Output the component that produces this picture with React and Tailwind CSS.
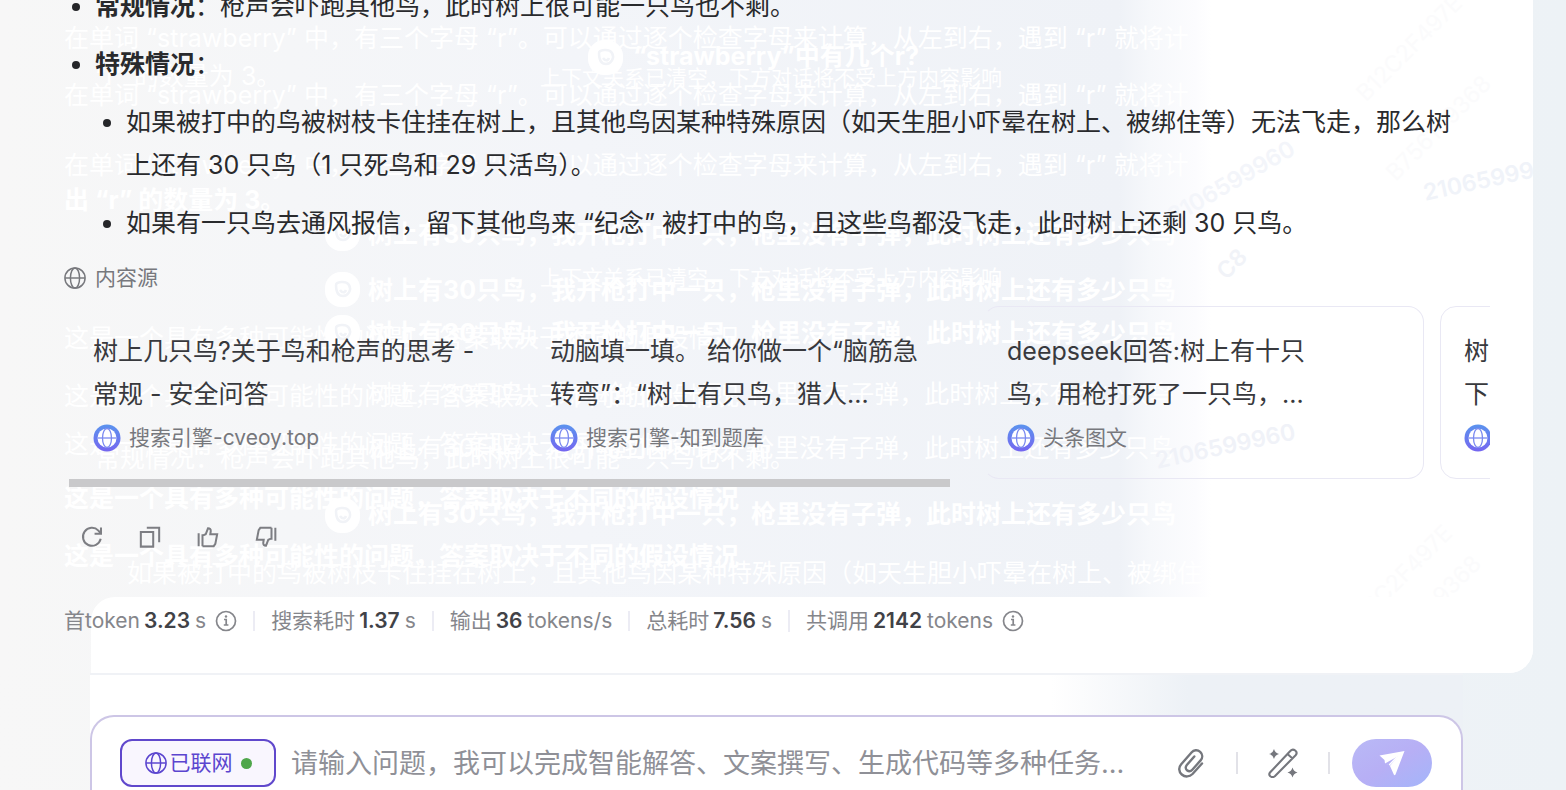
import React from "react";

const sources = [
  { lines: ["树上几只鸟?关于鸟和枪声的思考 -", "常规 - 安全问答"], from: "搜索引擎-cveoy.top" },
  { lines: ["动脑填一填。 给你做一个“脑筋急", "转弯”：“树上有只鸟，猎人..."], from: "搜索引擎-知到题库" },
  { lines: ["deepseek回答:树上有十只", "鸟，用枪打死了一只鸟，..."], from: "头条图文" },
  { lines: ["树", "下"], from: "搜索引擎" },
];

const stats = [
  { label: "首token", value: "3.23", unit: "s", info: true },
  { label: "搜索耗时", value: "1.37", unit: "s" },
  { label: "输出", value: "36", unit: "tokens/s" },
  { label: "总耗时", value: "7.56", unit: "s" },
  { label: "共调用", value: "2142", unit: "tokens", info: true },
];

const word = "在单词 “strawberry” 中，有三个字母 “r”。可以通过逐个检查字母来计算，从左到右，遇到 “r” 就将计";
const bird = "树上有30只鸟，我开枪打中一只，枪里没有子弹，此时树上还有多少只鸟";
const guess = "这是一个具有多种可能性的问题，答案取决于不同的假设情况";
const cleared = "上下文关系已清空，下方对话将不受上方内容影响";

// earlier messages that shine through the background
const traces = [
  { text: word, place: "left-[64px] top-[20px]" },
  { text: "“r” 的数量为 3。", place: "left-[95px] top-[58px]" },
  { text: word, place: "left-[64px] top-[77px]" },
  { text: "“strawberry”中有几个r?", place: "left-[633px] top-[38px] font-bold" },
  { text: cleared, place: "left-[540px] top-[60px] text-[21px]" },
  { text: word, place: "left-[64px] top-[147px]" },
  { text: "出 “r” 的数量为 3。", place: "left-[64px] top-[182px] font-bold" },
  { text: bird, place: "left-[368px] top-[216px] font-bold" },
  { text: cleared, place: "left-[540px] top-[260px] text-[21px]" },
  { text: bird, place: "left-[368px] top-[272px] font-bold" },
  { text: bird, place: "left-[368px] top-[315px] font-bold" },
  { text: guess, place: "left-[64px] top-[320px]" },
  { text: bird, place: "left-[368px] top-[376px]" },
  { text: guess, place: "left-[64px] top-[378px]" },
  { text: guess, place: "left-[64px] top-[426px]" },
  { text: bird, place: "left-[368px] top-[430px]" },
  { text: "常规情况：枪声会吓跑其他鸟，此时树上很可能一只鸟也不剩。", place: "left-[95px] top-[440px]" },
  { text: guess, place: "left-[64px] top-[480px] font-bold" },
  { text: bird, place: "left-[368px] top-[496px] font-bold" },
  { text: guess, place: "left-[64px] top-[538px] font-bold" },
  { text: "如果被打中的鸟被树枝卡住挂在树上，且其他鸟因某种特殊原因（如天生胆小吓晕在树上、被绑住", place: "left-[127px] top-[555px]" },
];

const avatars = [
  "left-[588px] top-[40px]",
  "left-[325px] top-[216px]",
  "left-[325px] top-[272px]",
  "left-[325px] top-[315px]",
  "left-[325px] top-[498px]",
];

const marks = [
  { text: "2106599960", place: "left-[1154px] top-[428px] -rotate-12 text-[#f0f2f8] font-semibold" },
  { text: "2106599960", place: "left-[1422px] top-[160px] -rotate-12 text-[#f0f3f9] font-semibold" },
  { text: "2106599960", place: "left-[1160px] top-[164px] -rotate-30 text-[#f3f5fa] font-semibold" },
  { text: "C8", place: "left-[1216px] top-[246px] -rotate-45 text-[#f1f3f8] font-semibold" },
  { text: "B12C2F497E", place: "left-[1340px] top-[30px] -rotate-45 text-[#fbfbfc]" },
  { text: "B756109368", place: "left-[1370px] top-[110px] -rotate-45 text-[#fbfbfc]" },
  { text: "B12C2F497E", place: "left-[1330px] top-[560px] -rotate-45 text-[#fbfbfc]" },
  { text: "B756109368", place: "left-[1360px] top-[590px] -rotate-45 text-[#fbfbfc]" },
];

const Globe = ({ className }) => (
  <svg viewBox="0 0 24 24" className={className} fill="none" stroke="currentColor" strokeWidth="1.6" aria-hidden="true">
    <circle cx="12" cy="12" r="11" />
    <ellipse cx="12" cy="12" rx="5" ry="11" />
    <path d="M1 12h22" />
  </svg>
);

const SourceIcon = () => (
  <svg viewBox="0 0 28 28" className="size-7 shrink-0" aria-hidden="true">
    <defs>
      <linearGradient id="globe-fill" x1="0" y1="0" x2="0" y2="1">
        <stop offset="0" stopColor="#5b93ee" />
        <stop offset="1" stopColor="#7566f0" />
      </linearGradient>
    </defs>
    <circle cx="14" cy="14" r="13.5" fill="url(#globe-fill)" />
    <circle cx="14" cy="14" r="9.5" fill="#fff" />
    <g fill="none" stroke="#7b8af0" strokeWidth="1.3">
      <ellipse cx="14" cy="14" rx="4.5" ry="9.5" />
      <path d="M4.5 14h19" />
    </g>
  </svg>
);

const InfoIcon = () => (
  <svg viewBox="0 0 22 22" className="ml-1 size-[22px]" fill="none" stroke="currentColor" strokeWidth="1.7" aria-hidden="true">
    <circle cx="11" cy="11" r="9.5" />
    <path d="M9 9.5h2.2v5.5M8.800 15h4.600" />
    <circle cx="11" cy="6.5" r="1.2" fill="currentColor" stroke="none" />
  </svg>
);

const ThumbPaths = () => (
  <path d="M1.800 8v14M6 9v13M6 10.500l3.500-1.500 2.500-6.500c2 0 3.200 1.200 3 3l-.5 3.500H22l-2 10.500-1.800 2.500H6" />
);

const actions = [
  { name: "重新生成", icon: <><path d="M21.500 14A9.800 9.800 0 1 1 19 5l2.500 3" /><path d="M21.800 1.500v7h-7" /></> },
  { name: "复制", icon: <><path d="M2 6.500h13.500v16H2z" /><path d="M8.500 1.800h13.500v16" /></> },
  { name: "赞", icon: <ThumbPaths /> },
  { name: "踩", icon: <g transform="rotate(180 12 12)"><ThumbPaths /></g> },
];

const Background = () => (
  <div aria-hidden="true" className="pointer-events-none absolute inset-0 overflow-hidden text-[25px] leading-9 whitespace-nowrap text-white select-none">
    {traces.map((t, i) => (
      <span key={i} className={`absolute ${t.place}`}>{t.text}</span>
    ))}
    {avatars.map((place) => (
      <span key={place} className={`absolute size-[35px] rounded-2xl bg-white ${place}`}>
        <svg viewBox="0 0 35 35" className="size-full" fill="none" stroke="#f1f3f7" strokeWidth="2.5">
          <path d="M11 13c0-3 10-5 13 0s-1 11-6 11-7-5-7-11zM15 18c2 3 5 3 6 0" />
        </svg>
      </span>
    ))}
    {marks.map((m, i) => (
      <span key={i} className={`absolute text-[23px] ${m.place}`}>{m.text}</span>
    ))}
  </div>
);

const Bullet = ({ children }) => (
  <li className="flex gap-[15px] pl-2">
    <span className="mt-[18px] size-2 shrink-0 rounded-full bg-[#252629]" />
    <div className="min-w-0 flex-1">{children}</div>
  </li>
);

const Answer = () => (
  <ul className="-mt-[15px] flex flex-col gap-[15px] pr-5 text-[25px] leading-[43px] text-[#292a2d]">
    <Bullet>
      <strong className="font-bold">常规情况</strong>：枪声会吓跑其他鸟，此时树上很可能一只鸟也不剩。
    </Bullet>
    <Bullet>
      <p><strong className="font-bold">特殊情况</strong>：</p>
      <ul className="mt-[15px] flex flex-col gap-[15px]">
        <Bullet>
          如果被打中的鸟被树枝卡住挂在树上，且其他鸟因某种特殊原因（如天生胆小吓晕在树上、被绑住等）无法飞走，那么树上还有 30 只鸟（1 只死鸟和 29 只活鸟）。
        </Bullet>
        <Bullet>
          如果有一只鸟去通风报信，留下其他鸟来 “纪念” 被打中的鸟，且这些鸟都没飞走，此时树上还剩 30 只鸟。
        </Bullet>
      </ul>
    </Bullet>
  </ul>
);

const Sources = () => (
  <section className="mt-[17px]">
    <h2 className="flex h-8 items-center gap-[9px] text-[21px] text-[#77787d]">
      <Globe className="size-[22px]" />
      内容源
    </h2>
    <div className="mt-3 ml-[5px] overflow-hidden">
      <div className="flex gap-4">
        {sources.map((s, i) => (
          <a
            key={s.from}
            href="#source"
            className={`block w-[441px] shrink-0 rounded-2xl border px-[23px] pt-[23px] pb-[18px] ${i > 1 ? "border-[#e9e8f4]" : "border-transparent"} ${i === 2 ? "border-l-transparent" : ""}`}
          >
            {s.lines.map((line) => (
              <span key={line} className="block text-[25px] leading-[43px] whitespace-nowrap text-[#38393d]">{line}</span>
            ))}
            <span className="flex h-11 items-center gap-2 text-[21px] text-[#77787d]">
              <SourceIcon />
              {s.from}
            </span>
          </a>
        ))}
      </div>
      <div className="h-2 w-[62%] bg-[#c9c9cb]" />
    </div>
  </section>
);

const Stats = () => (
  <div className="relative mt-11 pb-7">
    <div className="absolute inset-y-0 -right-[43px] left-[27px] rounded-tl-3xl bg-white" />
    <dl className="relative flex h-12 items-center text-[21px] text-[#85868b]">
      {stats.map((s, i) => (
        <div key={s.label} className={i > 0 ? "ml-4 flex items-center border-l-2 border-[#ececf4] pl-4 leading-5" : "flex items-center leading-5"}>
          <dt>{s.label}</dt>
          <dd className="ml-1 flex items-center gap-[5px]">
            <b className="font-semibold text-[#414247]">{s.value}</b>
            <span>{s.unit}</span>
            {s.info && <InfoIcon />}
          </dd>
        </div>
      ))}
    </dl>
  </div>
);

const Composer = () => (
  <div className="mr-[103px] ml-[90px] border-t-2 border-[#f0f2f6] bg-linear-to-r from-white from-70% to-[#edf1f6] to-80% pt-10">
    <form className="flex items-center rounded-t-3xl border-2 border-b-0 border-[#cdc6e6] bg-white pt-[22px] pr-[29px] pb-8 pl-7" onSubmit={(e) => e.preventDefault()}>
      <button type="button" className="flex h-12 w-[156px] shrink-0 items-center justify-center gap-[3px] rounded-xl border-2 border-[#6048cc] bg-[#f9f6fe] text-[21px] text-[#5b45cf]">
        <Globe className="size-[22px]" />
        已联网
        <span className="ml-[5px] size-[11px] rounded-full bg-[#4fa64a]" />
      </button>
      <input
        type="text"
        aria-label="问题"
        placeholder="请输入问题，我可以完成智能解答、文案撰写、生成代码等多种任务..."
        className="ml-[15px] h-12 min-w-0 flex-1 bg-transparent text-[27px] text-[#292a2d] outline-none placeholder:text-[#8f9097]"
      />
      <button type="button" aria-label="上传附件" className="ml-[30px] text-[#75777d]">
        <svg viewBox="0 0 30 30" className="size-[30px]" fill="none" stroke="currentColor" strokeWidth="2.4" strokeLinecap="round" strokeLinejoin="round">
          <path d="M26 15.500L16.500 26C13.500 29 9 29.300 5.800 26.500C2.500 23.500 2.500 19.200 5.200 16.200L15.500 4.500C17.800 1.800 21.500 1.500 24.200 3.800C26.800 6.200 26.800 9.800 24.600 12.400L16.300 21.800C14.800 23.500 12.600 23.600 11 22.300C9.400 20.900 9.300 18.700 10.800 17L18.300 8.500" />
        </svg>
      </button>
      <span className="ml-[30px] h-[22px] w-[2px] bg-[#e2e2e8]" />
      <button type="button" aria-label="润色" className="ml-[30px] text-[#75777d]">
        <svg viewBox="0 0 30 30" className="size-[30px]" fill="none" stroke="currentColor" strokeWidth="2.1" strokeLinejoin="round">
          <path d="M2 24.500L22.500 2.800C23.800 1.300 25.700 1.300 27.200 2.500C28.700 3.800 28.900 5.800 27.600 7.300L6.800 28.200C5.500 29.300 3.500 29.200 2.300 28.200C1.100 27 1 25.700 2 24.500zM19.500 6L24.500 10.500" />
          <path d="M6 1Q7 5 11 6Q7 7 6 11Q5 7 1 6Q5 5 6 1zM24.500 19.500Q25.500 23.500 29.500 24.500Q25.500 25.500 24.500 29.500Q23.500 25.500 19.500 24.500Q23.500 23.500 24.500 19.500z" fill="currentColor" stroke="none" />
        </svg>
      </button>
      <span className="ml-[30px] h-[22px] w-[2px] bg-[#e2e2e8]" />
      <button type="submit" aria-label="发送" className="ml-[22px] flex h-12 w-20 shrink-0 items-center justify-center rounded-full bg-linear-to-br from-[#b9b9f6] via-[#b7aff5] to-[#a3b5fa]">
        <svg viewBox="0 0 26 26" className="size-[26px]" aria-hidden="true">
          <path d="M.5 5.500L25.500 1L16.500 24.500Q15.500 26 14.800 24.500L10.800 15.500L6 13.200L5.500 10z" fill="#fff" />
          <path d="M6 13.500L18.500 6.500L10.800 16z" fill="#b7b1f5" />
          <path d="M10.200 15L18.500 6.500" stroke="#fff" strokeWidth="1.500" />
        </svg>
      </button>
    </form>
  </div>
);

export default function App() {
  return (
    <div className="h-screen overflow-hidden bg-linear-to-r from-[#f7f7f7] to-[#edf2f6] font-[Inter,'Noto_Sans_CJK_SC',sans-serif]" lang="zh-CN">
      <main className="relative mr-[33px] flow-root overflow-hidden rounded-br-3xl bg-[linear-gradient(to_right,#f7f7f7,#f3f5f9_38%,#eff2f7_73%,#f6f8fb_75%,#fcfcfe_78%,#fff_79%)]">
        <Background />
        <div className="relative flow-root pr-[43px] pl-16">
          <Answer />
          <Sources />
          <div className="mt-[34px] flex gap-[26px] pl-3">
            {actions.map((a) => (
              <button key={a.name} type="button" aria-label={a.name} className="flex size-8 items-center justify-center text-[#7d7e83]">
                <svg viewBox="0 0 24 24" className="size-[22px]" fill="none" stroke="currentColor" strokeWidth="2.2">{a.icon}</svg>
              </button>
            ))}
          </div>
          <Stats />
        </div>
      </main>
      <Composer />
    </div>
  );
}
